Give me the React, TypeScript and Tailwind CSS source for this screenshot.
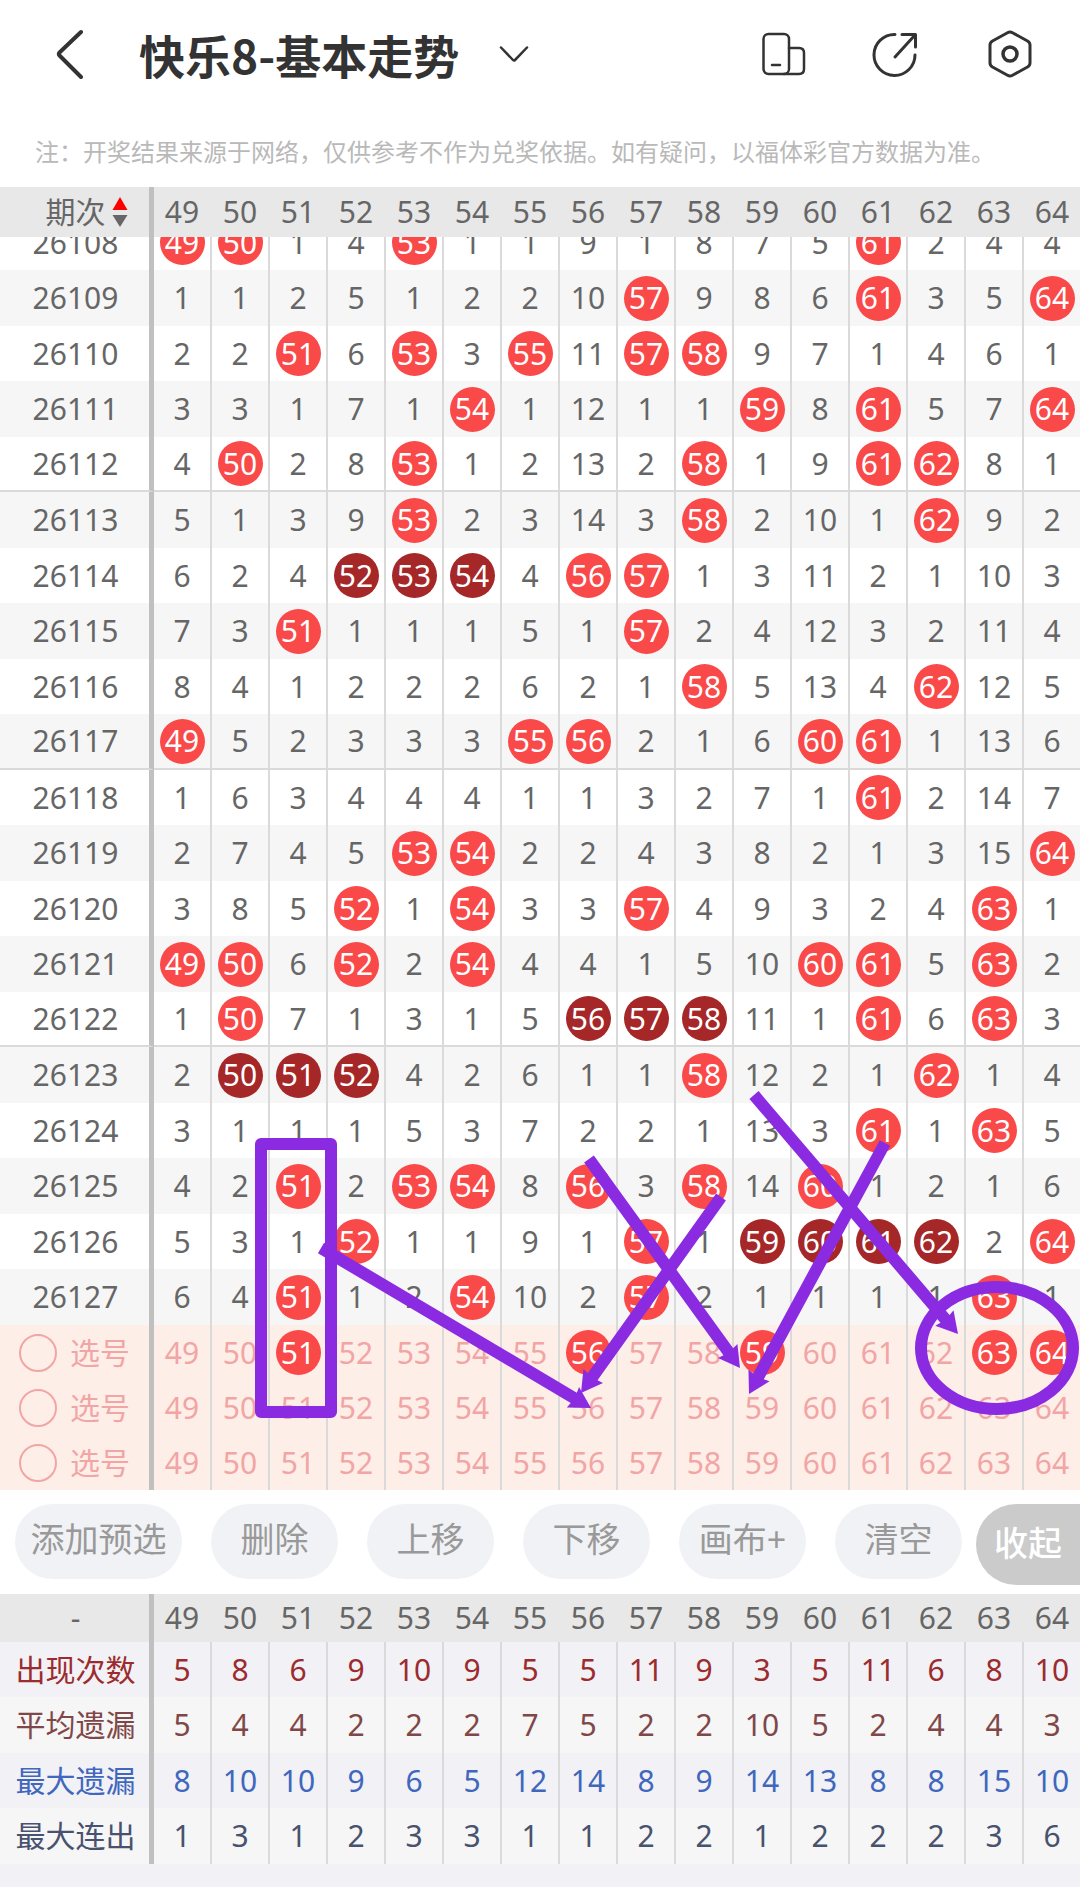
import { useState } from "react";

const COLUMNS = Array.from({ length: 16 }, (_, i) => 49 + i);

// "r" marks a drawn number, "d" a drawn number that is part of a consecutive run.
const DRAWS: [string, string][] = [
  ["26108", "r r 1 4 r 1 1 9 1 8 7 5 r 2 4 4"],
  ["26109", "1 1 2 5 1 2 2 10 r 9 8 6 r 3 5 r"],
  ["26110", "2 2 r 6 r 3 r 11 r r 9 7 1 4 6 1"],
  ["26111", "3 3 1 7 1 r 1 12 1 1 r 8 r 5 7 r"],
  ["26112", "4 r 2 8 r 1 2 13 2 r 1 9 r r 8 1"],
  ["26113", "5 1 3 9 r 2 3 14 3 r 2 10 1 r 9 2"],
  ["26114", "6 2 4 d d d 4 r r 1 3 11 2 1 10 3"],
  ["26115", "7 3 r 1 1 1 5 1 r 2 4 12 3 2 11 4"],
  ["26116", "8 4 1 2 2 2 6 2 1 r 5 13 4 r 12 5"],
  ["26117", "r 5 2 3 3 3 r r 2 1 6 r r 1 13 6"],
  ["26118", "1 6 3 4 4 4 1 1 3 2 7 1 r 2 14 7"],
  ["26119", "2 7 4 5 r r 2 2 4 3 8 2 1 3 15 r"],
  ["26120", "3 8 5 r 1 r 3 3 r 4 9 3 2 4 r 1"],
  ["26121", "r r 6 r 2 r 4 4 1 5 10 r r 5 r 2"],
  ["26122", "1 r 7 1 3 1 5 d d d 11 1 r 6 r 3"],
  ["26123", "2 d d d 4 2 6 1 1 r 12 2 1 r 1 4"],
  ["26124", "3 1 1 1 5 3 7 2 2 1 13 3 r 1 r 5"],
  ["26125", "4 2 r 2 r r 8 r 3 r 14 r 1 2 1 6"],
  ["26126", "5 3 1 r 1 1 9 1 r 1 d d d d 2 r"],
  ["26127", "6 4 r 1 2 r 10 2 r 2 1 1 1 1 r 1"],
];

const STATS = [
  { label: "出现次数", tone: "text-[#9c2b2d]", values: [5, 8, 6, 9, 10, 9, 5, 5, 11, 9, 3, 5, 11, 6, 8, 10] },
  { label: "平均遗漏", tone: "text-[#804748]", values: [5, 4, 4, 2, 2, 2, 7, 5, 2, 2, 10, 5, 2, 4, 4, 3] },
  { label: "最大遗漏", tone: "text-[#4067bd]", values: [8, 10, 10, 9, 6, 5, 12, 14, 8, 9, 14, 13, 8, 8, 15, 10] },
  { label: "最大连出", tone: "text-[#48526e]", values: [1, 3, 1, 2, 3, 3, 1, 1, 2, 2, 1, 2, 2, 2, 3, 6] },
];

const TABLE = "w-[calc(100%+2px)] table-fixed border-separate border-spacing-0 text-center text-[30px] leading-9";
const LABEL_CELL = "border-r-[5px] border-[#c0c0c0] py-0 pr-0 pl-0.5 font-normal";
const VALUE_CELL = "border-r-2 border-[#dadada] p-0";

function Columns() {
  return (
    <colgroup>
      <col className="w-[154px]" />
      {COLUMNS.map((n) => (
        <col key={n} />
      ))}
    </colgroup>
  );
}

function Ball({ value, dark = false }: { value: number; dark?: boolean }) {
  return (
    <span
      className={`mx-auto flex size-[45px] items-center justify-center rounded-full text-white ${
        dark ? "bg-[#a52728]" : "bg-[#f94949]"
      }`}
    >
      {value}
    </span>
  );
}

function Arrow({ from, to }: { from: [number, number]; to: [number, number] }) {
  const [x1, y1] = from;
  const [x2, y2] = to;
  const len = Math.hypot(x2 - x1, y2 - y1);
  const ux = (x2 - x1) / len;
  const uy = (y2 - y1) / len;
  const at = (back: number, side: number) =>
    `${x2 - ux * back - uy * side},${y2 - uy * back + ux * side}`;
  return (
    <polygon
      points={[at(len, 6), at(20, 6), at(21, 12), at(0, 0), at(21, -12), at(20, -6), at(len, -6)].join(" ")}
      fill="#8a2be2"
    />
  );
}

function Annotations() {
  return (
    <svg
      className="pointer-events-none absolute inset-0 h-full w-full"
      viewBox="0 237 1080 1253"
      preserveAspectRatio="none"
      aria-hidden="true"
    >
      <g fill="none" stroke="#8a2be2" strokeWidth="12" strokeLinejoin="round">
        <rect x="261" y="1144" width="70" height="268" />
        <ellipse cx="997" cy="1348" rx="76" ry="61" />
      </g>
      <Arrow from={[321, 1248]} to={[591, 1408]} />
      <Arrow from={[589, 1159]} to={[740, 1368]} />
      <Arrow from={[721, 1197]} to={[581, 1393]} />
      <Arrow from={[885, 1143]} to={[749, 1394]} />
      <Arrow from={[754, 1095]} to={[958, 1334]} />
    </svg>
  );
}

function Header() {
  return (
    <header className="flex h-[108px] items-center pr-12 pl-[54px] text-[#333]">
      <button type="button" aria-label="返回" className="mr-[53px]">
        <svg width="32" height="50" viewBox="0 0 32 50" fill="none" stroke="currentColor" strokeWidth="4" strokeLinecap="round" strokeLinejoin="round">
          <path d="M27 3 5.500 23.500Q4 25 5.500 26.500L27 48" />
        </svg>
      </button>
      <h1 className="font-['Noto_Sans_CJK_SC',sans-serif] text-[46px] leading-[60px] font-bold">快乐8-基本走势</h1>
      <button type="button" aria-label="切换走势" className="ml-10">
        <svg width="30" height="18" viewBox="0 0 30 18" fill="none" stroke="currentColor" strokeWidth="2.500" strokeLinecap="round" strokeLinejoin="round">
          <path d="M2 2.500 14 15Q15 16 16 15L28 2.500" />
        </svg>
      </button>
      <div className="ml-auto flex items-center gap-[66px]">
        <button type="button" aria-label="横竖屏切换">
          <svg width="44" height="46" viewBox="0 0 44 46" fill="none" stroke="currentColor" strokeWidth="2.500" strokeLinecap="round" strokeLinejoin="round">
            <rect x="1.500" y="3" width="25.500" height="40" rx="5" />
            <path d="M27 17h10q5 0 5 5v16q0 5-5 5H22M10 34h8" />
          </svg>
        </button>
        <button type="button" aria-label="分享" className="mr-1">
          <svg width="46" height="46" viewBox="0 0 46 46" fill="none" stroke="currentColor" strokeWidth="3" strokeLinecap="round" strokeLinejoin="round">
            <path d="M23 3.500A20.500 20.500 0 1 0 43 24" />
            <path d="M30 3.500h13.500V16M43 4 23 26" />
          </svg>
        </button>
        <button type="button" aria-label="设置">
          <svg width="44" height="48" viewBox="0 0 44 48" fill="none" stroke="currentColor" strokeWidth="3" strokeLinejoin="round">
            <path d="M19.500 2.700q2.500-1.400 5 0L39.500 11q2.500 1.500 2.500 4v18q0 2.500-2.500 4l-15 8.300q-2.500 1.400-5 0L4.500 37Q2 35.500 2 33V15q0-2.500 2.500-4z" />
            <circle cx="22" cy="24" r="7" strokeWidth="3.500" />
          </svg>
        </button>
      </div>
    </header>
  );
}

function PickRow({ index, initial }: { index: number; initial: number[] }) {
  const [picked, setPicked] = useState(initial);
  const toggle = (n: number) =>
    setPicked((p) => (p.includes(n) ? p.filter((x) => x !== n) : [...p, n]));
  return (
    <tr className="h-[55px] bg-[#feeee8] text-[#f2a5a5]">
      <th scope="row" className={LABEL_CELL}>
        <label className="flex items-center gap-[13px] pl-[17px]">
          <input
            type="radio"
            name="pick-row"
            value={index}
            className="size-[38px] appearance-none rounded-full border-2 border-[#f2a5a5] checked:bg-[#f2a5a5]"
          />
          选号
        </label>
      </th>
      {COLUMNS.map((n) => (
        <td key={n} className={VALUE_CELL}>
          <button type="button" aria-pressed={picked.includes(n)} onClick={() => toggle(n)} className="block w-full">
            {picked.includes(n) ? <Ball value={n} /> : n}
          </button>
        </td>
      ))}
    </tr>
  );
}

export default function App() {
  return (
    <div className="min-h-screen overflow-hidden bg-[#f1f1f6] font-['Noto_Sans','Noto_Sans_CJK_SC',sans-serif] text-[#666]">
      <div className="bg-white">
        <Header />
        <p className="h-[79px] pt-[26px] pl-[35px] text-2xl leading-9 text-[#b9b9b9]">
          注：开奖结果来源于网络，仅供参考不作为兑奖依据。如有疑问，以福体彩官方数据为准。
        </p>

        <table className={TABLE}>
          <Columns />
          <thead>
            <tr className="h-[50px] bg-[#e8e8e8]">
              <th scope="col" className={LABEL_CELL}>
                <button type="button" className="mx-auto flex items-center gap-[6px] pl-[22px]">
                  期次
                  <svg width="16" height="32" viewBox="0 0 16 32" aria-hidden="true">
                    <path d="M8 1 15.500 14H.5z" fill="#f00" />
                    <path d="M.5 19h15L8 31z" fill="#666" />
                  </svg>
                </button>
              </th>
              {COLUMNS.map((n) => (
                <th key={n} scope="col" className="border-r-2 border-[#e8e8e8] p-0 font-normal">
                  {n}
                </th>
              ))}
            </tr>
          </thead>
        </table>

        <div className="relative overflow-hidden">
          <table className={`-mt-[22px] ${TABLE}`}>
            <Columns />
            <tbody>
              {DRAWS.map(([issue, row], i) => {
                const closesGroup = i % 5 === 4 && i < DRAWS.length - 1;
                const edge = closesGroup ? "border-b-2 border-b-[#dadada]" : "";
                return (
                  <tr key={issue} className="h-[55px] even:h-14 even:bg-[#f6f6f6]">
                    <th scope="row" className={`${LABEL_CELL} ${edge}`}>
                      {issue}
                    </th>
                    {row.split(" ").map((cell, c) => (
                      <td key={c} className={`${VALUE_CELL} ${edge}`}>
                        {cell === "r" || cell === "d" ? <Ball value={COLUMNS[c]} dark={cell === "d"} /> : cell}
                      </td>
                    ))}
                  </tr>
                );
              })}
              <PickRow index={1} initial={[51, 56, 59, 63, 64]} />
              <PickRow index={2} initial={[]} />
              <PickRow index={3} initial={[]} />
            </tbody>
          </table>
          <Annotations />
        </div>

        <div className="flex items-start gap-[29px] pt-[14px] pb-[9px] pl-[15px] text-[34px] leading-10 whitespace-nowrap text-[#999]">
          <button type="button" className="h-[75px] w-[167px] shrink-0 rounded-full bg-[#f1f2f5] pb-1.5">
            添加预选
          </button>
          {["删除", "上移", "下移", "画布+", "清空"].map((label) => (
            <button key={label} type="button" className="h-[75px] w-[127px] shrink-0 rounded-full bg-[#f1f2f5] pb-1.5">
              {label}
            </button>
          ))}
          <button type="button" className="-ml-[15px] h-[81px] grow rounded-l-full bg-[#cbcbcb] pb-1 pl-[18px] text-left font-medium text-white">
            收起
          </button>
        </div>
      </div>

      <table className={TABLE}>
        <Columns />
        <thead>
          <tr className="h-12 bg-[#e8e8e8]">
            <th scope="col" className={LABEL_CELL}>
              -
            </th>
            {COLUMNS.map((n) => (
              <th key={n} scope="col" className="border-r-2 border-[#e8e8e8] p-0 font-normal">
                {n}
              </th>
            ))}
          </tr>
        </thead>
        <tbody>
          {STATS.map(({ label, tone, values }) => (
            <tr key={label} className={`h-[55px] odd:bg-[#f1f1f6] even:h-14 even:bg-[#f6f6f6] ${tone}`}>
              <th scope="row" className={LABEL_CELL}>
                {label}
              </th>
              {values.map((v, c) => (
                <td key={c} className={VALUE_CELL}>
                  {v}
                </td>
              ))}
            </tr>
          ))}
        </tbody>
      </table>
    </div>
  );
}
